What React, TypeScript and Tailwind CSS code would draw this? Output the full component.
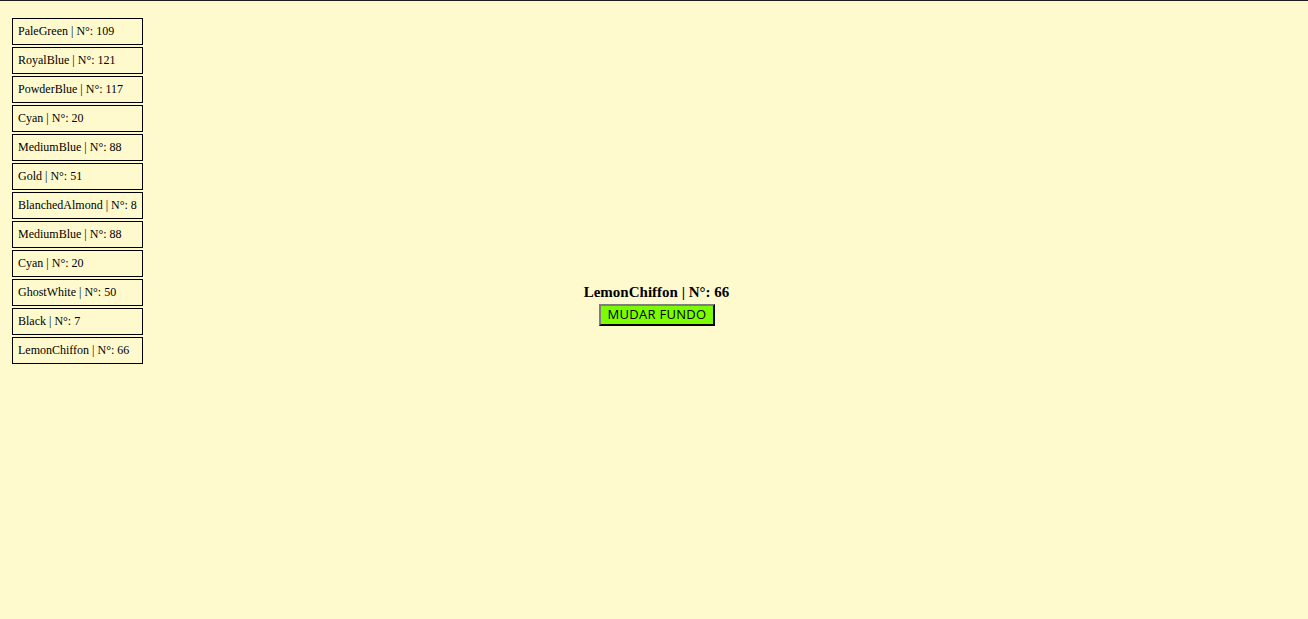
const colors = [
  { name: "PaleGreen", n: 109 },
  { name: "RoyalBlue", n: 121 },
  { name: "PowderBlue", n: 117 },
  { name: "Cyan", n: 20 },
  { name: "MediumBlue", n: 88 },
  { name: "Gold", n: 51 },
  { name: "BlanchedAlmond", n: 8 },
  { name: "MediumBlue", n: 88 },
  { name: "Cyan", n: 20 },
  { name: "GhostWhite", n: 50 },
  { name: "Black", n: 7 },
  { name: "LemonChiffon", n: 66 },
];

const App = () => {
  const current = colors[colors.length - 1];

  return (
    <div className="grid h-[619px] border-t border-[#1c1c1c] bg-[#fffacd] font-['Liberation_Serif',serif] text-black">
      <ul className="col-start-1 row-start-1 flex flex-col gap-[2px] self-start pl-3 pt-[17px]">
        {colors.map((c, i) => (
          <li
            key={i}
            className="flex h-[27px] w-[131px] items-center border border-black px-[5px] pb-[2px] text-[12px] whitespace-nowrap"
          >
            {c.name} | N°: {c.n}
          </li>
        ))}
      </ul>

      <div className="col-start-1 row-start-1 flex flex-col items-center justify-center gap-[3px] pb-[12px] pl-[5px]">
        <p className="text-[15px] font-bold leading-[18px]">
          {current.name} | N°: {current.n}
        </p>
        <button className="ml-[1px] h-[22px] border-2 border-[#2a2a2a] bg-[#7cfc00] px-[6px] font-['Open_Sans',sans-serif] text-[13px] leading-none tracking-[0.3px] text-black [border-style:outset]">
          MUDAR FUNDO
        </button>
      </div>
    </div>
  );
};

export default App;
